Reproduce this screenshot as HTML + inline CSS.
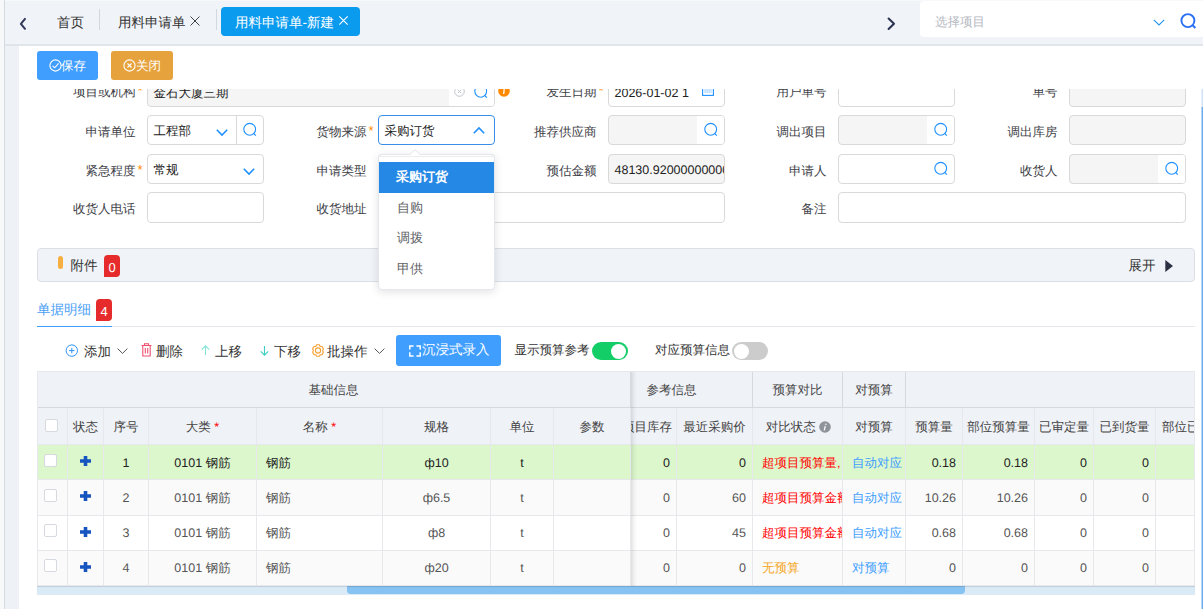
<!DOCTYPE html><html><head><meta charset="utf-8"><style>
*{box-sizing:border-box;margin:0;padding:0}
html,body{width:1203px;height:609px;overflow:hidden;background:#fff}
body{position:relative;font-family:"Liberation Sans",sans-serif;font-size:12.5px;color:#303133;text-rendering:geometricPrecision}
.a{position:absolute}
.t{position:absolute;white-space:nowrap}
svg{position:absolute;overflow:visible}
.lbl{position:absolute;font-size:12.5px;color:#3d4046;text-align:right;line-height:30px;height:30px;white-space:nowrap}
.star{position:absolute;left:100%;top:-4px;margin-left:2px;color:#ff8a00;font-size:13px;line-height:20px}
.inp{position:absolute;height:30px;border:1px solid #d9d9d9;border-radius:4px;background:#fff;font-size:12.5px;line-height:26px;padding-top:2px;padding-left:5.5px;color:#222;overflow:hidden;white-space:nowrap}
.dis{background:#f5f5f5}
.sbtn{position:absolute;right:0;top:0;width:27px;height:28px;background:#fff}
.cell{position:absolute;border-right:1px solid #e6e8eb;border-bottom:1px solid #e6e8eb;font-size:12.5px;text-align:center;white-space:nowrap;overflow:hidden;color:#333}
.hd{background:#eff2f7;color:#444}
</style></head><body>
<div class="a" style="left:0;top:0;width:1203px;height:46px;background:#f0f3f8;border-bottom:2px solid #e0e5ec"></div>
<div class="a" style="left:0;top:0;width:1203px;height:1px;background:#f7f8fa"></div>
<div class="a" style="left:0;top:0;width:4px;height:609px;background:#f7f8fa"></div>
<div class="a" style="left:4px;top:0;width:1px;height:609px;background:#d5d9e0"></div>
<div class="a" style="left:5px;top:46px;width:14px;height:563px;background:#eef1f6"></div>
<svg style="left:19px;top:17px" width="10" height="14" viewBox="0 0 10 14"><path d="M6 1.9 L1.9 6.8 L6 11.8" fill="none" stroke="#2f375a" stroke-width="2" stroke-linecap="round" stroke-linejoin="round"/></svg>
<div class="t" style="left:57px;top:13px;font-size:13.5px;line-height:20px;color:#333">首页</div>
<div class="a" style="left:99px;top:9px;width:1px;height:21px;background:#d3d7de"></div>
<div class="t" style="left:118px;top:13px;font-size:13.5px;line-height:20px;color:#333">用料申请单</div>
<svg style="left:190px;top:16px" width="10" height="10" viewBox="0 0 10 10"><path d="M0.5 0.5 L9.5 9.5 M9.5 0.5 L0.5 9.5" stroke="#444" stroke-width="1"/></svg>
<div class="a" style="left:216px;top:9px;width:1px;height:21px;background:#d3d7de"></div>
<div class="a" style="left:221px;top:7px;width:139px;height:29px;background:#0a9bef;border-radius:4px"></div>
<div class="t" style="left:235px;top:13px;font-size:13.5px;line-height:20px;color:#fff">用料申请单-新建</div>
<svg style="left:339px;top:16px" width="9" height="9" viewBox="0 0 9 9"><path d="M0.3 0.3 L8.7 8.7 M8.7 0.3 L0.3 8.7" stroke="#fff" stroke-width="1.1"/></svg>
<svg style="left:886px;top:17px" width="10" height="14" viewBox="0 0 10 14"><path d="M2.6 1.6 L8 6.8 L2.6 12" fill="none" stroke="#2b3453" stroke-width="2.1" stroke-linecap="round" stroke-linejoin="round"/></svg>
<div class="a" style="left:920px;top:1px;width:300px;height:36px;background:#fff;border-radius:4px"></div>
<div class="t" style="left:935px;top:12px;font-size:12.5px;line-height:20px;color:#b4b8bf">选择项目</div>
<svg style="left:1153px;top:19px" width="12" height="7" viewBox="0 0 12 7"><path d="M0.8 0.8 L6 6 L11.2 0.8" fill="none" stroke="#2196f3" stroke-width="1.1"/></svg>
<svg style="left:1179px;top:13px" width="19" height="17" viewBox="0 0 19 17"><circle cx="8.9" cy="7.6" r="6.5" fill="none" stroke="#2a70f4" stroke-width="1.9"/><path d="M13.6 12.3 L16.4 15" stroke="#2a70f4" stroke-width="2"/></svg>
<div class="a" style="left:37px;top:51px;width:61px;height:29px;border-radius:3px;background:#409eff"></div>
<svg style="left:48.5px;top:58.5px" width="13" height="13" viewBox="0 0 13 13"><circle cx="6.5" cy="6.5" r="5.6" fill="none" stroke="#fff" stroke-width="1.1"/><path d="M3.6 6.8 L5.7 8.8 L9.6 4.4" fill="none" stroke="#fff" stroke-width="1.1"/></svg>
<div class="t" style="left:61px;top:56px;font-size:12.5px;line-height:20px;color:#fff">保存</div>
<div class="a" style="left:111px;top:51px;width:62px;height:29px;border-radius:3px;background:#e6a23c"></div>
<svg style="left:123px;top:58.5px" width="13" height="13" viewBox="0 0 13 13"><circle cx="6.5" cy="6.5" r="5.6" fill="none" stroke="#fff" stroke-width="1.1"/><path d="M4.5 4.5 L8.5 8.5 M8.5 4.5 L4.5 8.5" fill="none" stroke="#fff" stroke-width="1.1"/></svg>
<div class="t" style="left:136px;top:56px;font-size:12.5px;line-height:20px;color:#fff">关闭</div>
<div class="a" style="left:19px;top:89px;width:1182px;height:520px;overflow:hidden"><div class="a" style="left:-19px;top:-89px;width:1203px;height:700px">
<div class="lbl" style="left:-14.5px;top:76.5px;width:150px"><span style="position:relative">项目或机构<span class="star">*</span></span></div>
<div class="inp dis" style="left:147px;top:77px;width:348px;">金石大厦三期<div class="sbtn" style="width:45px"></div><svg style="right:29px;top:7.5px" width="11" height="11" viewBox="0 0 11 11"><circle cx="5.5" cy="5.5" r="4.8" fill="none" stroke="#c0c4cc" stroke-width="1"/><path d="M3.8 3.8 L7.2 7.2 M7.2 3.8 L3.8 7.2" stroke="#c0c4cc" stroke-width="1"/></svg><svg style="right:4px;top:5px" width="18" height="18" viewBox="0 0 18 18"><circle cx="8.7" cy="8.3" r="5.9" fill="none" stroke="#1e90ff" stroke-width="1.1"/><path d="M12.6 12.3 L14.8 14.6" stroke="#1e90ff" stroke-width="1.2000000000000002"/></svg></div>
<svg style="left:498px;top:85px" width="12" height="12" viewBox="0 0 12 12"><circle cx="6" cy="6" r="5.8" fill="#ff8a00"/><path d="M6.3 3 L5.7 9" stroke="#fff" stroke-width="1.3"/></svg>
<div class="lbl" style="left:446.5px;top:76.5px;width:150px"><span style="position:relative">发生日期<span class="star">*</span></span></div>
<div class="inp " style="left:608px;top:77px;width:117px;">2026-01-02 1<svg style="right:10px;top:7px" width="12" height="11" viewBox="0 0 12 11"><rect x="0.6" y="1.6" width="10.8" height="8.8" fill="none" stroke="#1e90ff" stroke-width="1.1"/><path d="M2.5 5 H9.5 M2.5 7 H9.5" stroke="#1e90ff" stroke-width="0.8" stroke-dasharray="1.2 0.8"/></svg></div>
<div class="lbl" style="left:676.5px;top:76.5px;width:150px"><span style="position:relative">用户单号</span></div>
<div class="inp " style="left:838px;top:77px;width:117px;"></div>
<div class="lbl" style="left:907.5px;top:76.5px;width:150px"><span style="position:relative">单号</span></div>
<div class="inp dis" style="left:1069px;top:77px;width:117px;"></div>
<div class="lbl" style="left:-14.5px;top:116.5px;width:150px"><span style="position:relative">申请单位</span></div>
<div class="inp " style="left:147px;top:115px;width:117px;">工程部<svg style="right:35.5px;top:12.5px" width="12" height="7" viewBox="0 0 12 7"><path d="M0.8 0.8 L6 6 L11.2 0.8" fill="none" stroke="#1e90ff" stroke-width="1.6"/></svg><div class="a" style="right:26px;top:-1px;width:1px;height:30px;background:#d9d9d9"></div><svg style="right:4px;top:5px" width="18" height="18" viewBox="0 0 18 18"><circle cx="8.7" cy="8.3" r="5.9" fill="none" stroke="#1e90ff" stroke-width="1.1"/><path d="M12.6 12.3 L14.8 14.6" stroke="#1e90ff" stroke-width="1.2000000000000002"/></svg></div>
<div class="lbl" style="left:216.5px;top:116.5px;width:150px"><span style="position:relative">货物来源<span class="star">*</span></span></div>
<div class="inp " style="left:378px;top:115px;width:117px;border-color:#3a8ee6">采购订货<svg style="right:9px;top:11px" width="12" height="7" viewBox="0 0 12 7"><path d="M0.8 6.2 L6 1 L11.2 6.2" fill="none" stroke="#1e90ff" stroke-width="1.6"/></svg></div>
<div class="lbl" style="left:446.5px;top:116.5px;width:150px"><span style="position:relative">推荐供应商</span></div>
<div class="inp dis" style="left:608px;top:115px;width:117px;"><div class="sbtn"></div><svg style="right:4px;top:5px" width="18" height="18" viewBox="0 0 18 18"><circle cx="8.7" cy="8.3" r="5.9" fill="none" stroke="#1e90ff" stroke-width="1.1"/><path d="M12.6 12.3 L14.8 14.6" stroke="#1e90ff" stroke-width="1.2000000000000002"/></svg></div>
<div class="lbl" style="left:676.5px;top:116.5px;width:150px"><span style="position:relative">调出项目</span></div>
<div class="inp dis" style="left:838px;top:115px;width:117px;"><div class="sbtn"></div><svg style="right:4px;top:5px" width="18" height="18" viewBox="0 0 18 18"><circle cx="8.7" cy="8.3" r="5.9" fill="none" stroke="#1e90ff" stroke-width="1.1"/><path d="M12.6 12.3 L14.8 14.6" stroke="#1e90ff" stroke-width="1.2000000000000002"/></svg></div>
<div class="lbl" style="left:907.5px;top:116.5px;width:150px"><span style="position:relative">调出库房</span></div>
<div class="inp dis" style="left:1069px;top:115px;width:117px;"></div>
<div class="lbl" style="left:-14.5px;top:155.5px;width:150px"><span style="position:relative">紧急程度<span class="star">*</span></span></div>
<div class="inp " style="left:147px;top:154px;width:117px;">常规<svg style="right:8.5px;top:12.5px" width="12" height="7" viewBox="0 0 12 7"><path d="M0.8 0.8 L6 6 L11.2 0.8" fill="none" stroke="#1e90ff" stroke-width="1.6"/></svg></div>
<div class="lbl" style="left:216.5px;top:155.5px;width:150px"><span style="position:relative">申请类型</span></div>
<div class="inp " style="left:378px;top:154px;width:117px;"></div>
<div class="lbl" style="left:446.5px;top:155.5px;width:150px"><span style="position:relative">预估金额</span></div>
<div class="inp dis" style="left:608px;top:154px;width:117px;">48130.920000000000</div>
<div class="lbl" style="left:676.5px;top:155.5px;width:150px"><span style="position:relative">申请人</span></div>
<div class="inp " style="left:838px;top:154px;width:117px;"><svg style="right:4px;top:5px" width="18" height="18" viewBox="0 0 18 18"><circle cx="8.7" cy="8.3" r="5.9" fill="none" stroke="#1e90ff" stroke-width="1.1"/><path d="M12.6 12.3 L14.8 14.6" stroke="#1e90ff" stroke-width="1.2000000000000002"/></svg></div>
<div class="lbl" style="left:907.5px;top:155.5px;width:150px"><span style="position:relative">收货人</span></div>
<div class="inp dis" style="left:1069px;top:154px;width:117px;"><div class="sbtn"></div><svg style="right:4px;top:5px" width="18" height="18" viewBox="0 0 18 18"><circle cx="8.7" cy="8.3" r="5.9" fill="none" stroke="#1e90ff" stroke-width="1.1"/><path d="M12.6 12.3 L14.8 14.6" stroke="#1e90ff" stroke-width="1.2000000000000002"/></svg></div>
<div class="lbl" style="left:-14.5px;top:193.5px;width:150px"><span style="position:relative">收货人电话</span></div>
<div class="inp " style="left:147px;top:192px;width:117px;height:31px"></div>
<div class="lbl" style="left:216.5px;top:193.5px;width:150px"><span style="position:relative">收货地址</span></div>
<div class="inp " style="left:378px;top:192px;width:347px;height:31px"></div>
<div class="lbl" style="left:676.5px;top:193.5px;width:150px"><span style="position:relative">备注</span></div>
<div class="inp " style="left:838px;top:192px;width:348px;height:31px"></div>
<div class="a" style="left:37px;top:248px;width:1158px;height:34px;background:#f0f3f8;border:1px solid #dcdfe4;border-radius:4px"></div>
<div class="a" style="left:58px;top:256px;width:5px;height:13px;background:#f5b041;border-radius:3px"></div>
<div class="t" style="left:70.5px;top:256px;font-size:13.5px;line-height:20px;color:#333">附件</div>
<div class="a" style="left:104px;top:255px;width:16px;height:22px;background:#e52b2b;border-radius:4px 4px 4px 0;color:#fff;font-size:13px;line-height:25px;text-align:center">0</div>
<div class="t" style="left:1128.5px;top:256px;font-size:13.5px;line-height:20px;color:#333">展开</div>
<svg style="left:1164.5px;top:259.5px" width="8" height="12" viewBox="0 0 8 12"><path d="M0.3 0 L8 6 L0.3 12 Z" fill="#2b3143"/></svg>
<div class="a" style="left:37px;top:326px;width:1158px;height:1px;background:#e4e7ed"></div>
<div class="a" style="left:37px;top:326px;width:75px;height:1px;background:#409eff"></div>
<div class="t" style="left:37px;top:300px;font-size:13.5px;line-height:20px;color:#4a9ef5">单据明细</div>
<div class="a" style="left:96px;top:299px;width:16px;height:22px;background:#e52b2b;border-radius:4px 4px 4px 0;color:#fff;font-size:13px;line-height:26px;text-align:center">4</div>
<svg style="left:65px;top:344px" width="14" height="14" viewBox="0 0 14 14"><circle cx="6.8" cy="6.6" r="5.7" fill="none" stroke="#2a90f5" stroke-width="1"/><path d="M6.8 3.9 V9.3 M4.1 6.6 H9.5" stroke="#2a90f5" stroke-width="1"/></svg>
<div class="t" style="left:84px;top:342px;font-size:13.5px;line-height:20px;color:#333">添加</div>
<svg style="left:117px;top:348px" width="11" height="6" viewBox="0 0 11 6"><path d="M0.6 0.6 L5.5 5.4 L10.4 0.6" fill="none" stroke="#555" stroke-width="1"/></svg>
<svg style="left:141px;top:343px" width="11" height="14" viewBox="0 0 11 14"><path d="M0.5 2.5 H10.5 M3.5 2.5 V0.8 H7.5 V2.5 M1.8 2.5 V13 H9.2 V2.5 M4.3 5 V10.5 M6.7 5 V10.5" fill="none" stroke="#f0506e" stroke-width="1.1"/></svg>
<div class="t" style="left:156px;top:342px;font-size:13.5px;line-height:20px;color:#333">删除</div>
<svg style="left:201px;top:345px" width="9" height="10" viewBox="0 0 9 10"><path d="M4.5 10 V0.9 M0.8 4.6 L4.5 0.9 L8.2 4.6" fill="none" stroke="#86e3d9" stroke-width="1.1"/></svg>
<div class="t" style="left:215px;top:342px;font-size:13.5px;line-height:20px;color:#333">上移</div>
<svg style="left:260px;top:346px" width="9" height="10" viewBox="0 0 9 10"><path d="M4.5 0 V9.1 M0.8 5.4 L4.5 9.1 L8.2 5.4" fill="none" stroke="#3ccfc5" stroke-width="1.1"/></svg>
<div class="t" style="left:274px;top:342px;font-size:13.5px;line-height:20px;color:#333">下移</div>
<svg style="left:311px;top:344px" width="14" height="14" viewBox="0 0 14 14"><circle cx="7" cy="6.5" r="2.6" fill="none" stroke="#f7a035" stroke-width="1.1"/><path d="M5.6 0.8 H8.4 L9.2 2.4 L11 2.5 L12.4 4.9 L11.6 6.5 L12.4 8.2 L11 10.6 L9.2 10.7 L8.4 12.3 H5.6 L4.8 10.7 L3 10.6 L1.6 8.2 L2.4 6.5 L1.6 4.9 L3 2.5 L4.8 2.4 Z" fill="none" stroke="#f7a035" stroke-width="1.1" stroke-linejoin="round"/></svg>
<div class="t" style="left:327px;top:342px;font-size:13.5px;line-height:20px;color:#333">批操作</div>
<svg style="left:374px;top:348px" width="11" height="6" viewBox="0 0 11 6"><path d="M0.6 0.6 L5.5 5.4 L10.4 0.6" fill="none" stroke="#555" stroke-width="1"/></svg>
<div class="a" style="left:396px;top:335px;width:105px;height:31px;background:#409eff;border-radius:3px"></div>
<svg style="left:0;top:0" width="1" height="1"><path d="M409.8 349.6 V345.9 H413.6 M416.4 345.9 H420.2 V349.6 M409.8 352.2 V356 H413.6 M420.2 352.2 V356 H416.4" fill="none" stroke="#fff" stroke-width="1.5"/></svg>
<div class="t" style="left:422px;top:340px;font-size:13.5px;line-height:20px;color:#fff">沉浸式录入</div>
<div class="t" style="left:514.5px;top:340px;font-size:12.5px;line-height:20px;color:#333">显示预算参考</div>
<div class="a" style="left:592px;top:342px;width:36px;height:18px;background:#13ce66;border-radius:9px"></div>
<div class="a" style="left:611px;top:343.5px;width:15px;height:15px;background:#fff;border-radius:50%"></div>
<div class="t" style="left:655px;top:340px;font-size:12.5px;line-height:20px;color:#333">对应预算信息</div>
<div class="a" style="left:732px;top:342px;width:36px;height:18px;background:#cccccc;border-radius:9px"></div>
<div class="a" style="left:733.5px;top:343.5px;width:15px;height:15px;background:#fff;border-radius:50%"></div>
<div class="a" style="left:37px;top:371px;width:1158px;height:215px;overflow:hidden;border-left:1px solid #e6e8eb;border-top:1px solid #e6e8eb">
<div class="cell hd" style="left:553px;top:-1px;width:162px;height:37px;line-height:39px;border-color:#d6d9dd">参考信息</div>
<div class="cell hd" style="left:715px;top:-1px;width:90px;height:37px;line-height:39px;border-color:#d6d9dd">预算对比</div>
<div class="cell hd" style="left:805px;top:-1px;width:63px;height:37px;line-height:39px;border-color:#d6d9dd">对预算</div>
<div class="cell hd" style="left:868px;top:-1px;width:324px;height:37px;line-height:39px;border-color:#d6d9dd"></div>
<div class="cell hd" style="left:580px;top:36px;width:59px;height:37px;line-height:39px;">项目库存</div>
<div class="cell hd" style="left:639px;top:36px;width:76px;height:37px;line-height:39px;">最近采购价</div>
<div class="cell hd" style="left:715px;top:36px;width:90px;height:37px;line-height:39px;"><span style="position:relative;left:1px">对比状态 <svg style="position:relative;vertical-align:-2px" width="12" height="12" viewBox="0 0 12 12"><circle cx="6" cy="6" r="5.8" fill="#8f939a"/><circle cx="6.9" cy="3.2" r="0.8" fill="#fff"/><path d="M6.3 5 L5.2 9.4" stroke="#fff" stroke-width="1.2"/></svg></span></div>
<div class="cell hd" style="left:805px;top:36px;width:63px;height:37px;line-height:39px;">对预算</div>
<div class="cell hd" style="left:868px;top:36px;width:57px;height:37px;line-height:39px;">预算量</div>
<div class="cell hd" style="left:925px;top:36px;width:72px;height:37px;line-height:39px;">部位预算量</div>
<div class="cell hd" style="left:997px;top:36px;width:59px;height:37px;line-height:39px;">已审定量</div>
<div class="cell hd" style="left:1056px;top:36px;width:62px;height:37px;line-height:39px;">已到货量</div>
<div class="cell hd" style="left:1118px;top:36px;width:74px;height:37px;line-height:39px;text-align:left;padding-left:6px">部位已到货</div>
<div class="cell " style="left:580px;top:73px;width:59px;height:35px;line-height:37px;background:#dcf7cc;text-align:right;padding-right:6px;color:#222">0</div>
<div class="cell " style="left:639px;top:73px;width:76px;height:35px;line-height:37px;background:#dcf7cc;text-align:right;padding-right:6px;color:#222">0</div>
<div class="cell " style="left:715px;top:73px;width:90px;height:35px;line-height:37px;background:#dcf7cc;text-align:left;padding-left:9px;color:#222"><span style="color:#f00">超项目预算量,</span></div>
<div class="cell " style="left:805px;top:73px;width:63px;height:35px;line-height:37px;background:#dcf7cc;text-align:left;padding-left:9px;color:#222"><span style="color:#409eff">自动对应</span></div>
<div class="cell " style="left:868px;top:73px;width:57px;height:35px;line-height:37px;background:#dcf7cc;text-align:right;padding-right:6px;color:#222">0.18</div>
<div class="cell " style="left:925px;top:73px;width:72px;height:35px;line-height:37px;background:#dcf7cc;text-align:right;padding-right:6px;color:#222">0.18</div>
<div class="cell " style="left:997px;top:73px;width:59px;height:35px;line-height:37px;background:#dcf7cc;text-align:right;padding-right:6px;color:#222">0</div>
<div class="cell " style="left:1056px;top:73px;width:62px;height:35px;line-height:37px;background:#dcf7cc;text-align:right;padding-right:6px;color:#222">0</div>
<div class="cell " style="left:1118px;top:73px;width:74px;height:35px;line-height:37px;background:#dcf7cc;text-align:left;padding-left:9px;color:#222"></div>
<div class="cell " style="left:580px;top:108px;width:59px;height:36px;line-height:36px;background:#fafafa;text-align:right;padding-right:6px;color:#555">0</div>
<div class="cell " style="left:639px;top:108px;width:76px;height:36px;line-height:36px;background:#fafafa;text-align:right;padding-right:6px;color:#555">60</div>
<div class="cell " style="left:715px;top:108px;width:90px;height:36px;line-height:36px;background:#fafafa;text-align:left;padding-left:9px;color:#555"><span style="color:#f00">超项目预算金额</span></div>
<div class="cell " style="left:805px;top:108px;width:63px;height:36px;line-height:36px;background:#fafafa;text-align:left;padding-left:9px;color:#555"><span style="color:#409eff">自动对应</span></div>
<div class="cell " style="left:868px;top:108px;width:57px;height:36px;line-height:36px;background:#fafafa;text-align:right;padding-right:6px;color:#555">10.26</div>
<div class="cell " style="left:925px;top:108px;width:72px;height:36px;line-height:36px;background:#fafafa;text-align:right;padding-right:6px;color:#555">10.26</div>
<div class="cell " style="left:997px;top:108px;width:59px;height:36px;line-height:36px;background:#fafafa;text-align:right;padding-right:6px;color:#555">0</div>
<div class="cell " style="left:1056px;top:108px;width:62px;height:36px;line-height:36px;background:#fafafa;text-align:right;padding-right:6px;color:#555">0</div>
<div class="cell " style="left:1118px;top:108px;width:74px;height:36px;line-height:36px;background:#fafafa;text-align:left;padding-left:9px;color:#555"></div>
<div class="cell " style="left:580px;top:144px;width:59px;height:35px;line-height:35px;background:#ffffff;text-align:right;padding-right:6px;color:#555">0</div>
<div class="cell " style="left:639px;top:144px;width:76px;height:35px;line-height:35px;background:#ffffff;text-align:right;padding-right:6px;color:#555">45</div>
<div class="cell " style="left:715px;top:144px;width:90px;height:35px;line-height:35px;background:#ffffff;text-align:left;padding-left:9px;color:#555"><span style="color:#f00">超项目预算金额</span></div>
<div class="cell " style="left:805px;top:144px;width:63px;height:35px;line-height:35px;background:#ffffff;text-align:left;padding-left:9px;color:#555"><span style="color:#409eff">自动对应</span></div>
<div class="cell " style="left:868px;top:144px;width:57px;height:35px;line-height:35px;background:#ffffff;text-align:right;padding-right:6px;color:#555">0.68</div>
<div class="cell " style="left:925px;top:144px;width:72px;height:35px;line-height:35px;background:#ffffff;text-align:right;padding-right:6px;color:#555">0.68</div>
<div class="cell " style="left:997px;top:144px;width:59px;height:35px;line-height:35px;background:#ffffff;text-align:right;padding-right:6px;color:#555">0</div>
<div class="cell " style="left:1056px;top:144px;width:62px;height:35px;line-height:35px;background:#ffffff;text-align:right;padding-right:6px;color:#555">0</div>
<div class="cell " style="left:1118px;top:144px;width:74px;height:35px;line-height:35px;background:#ffffff;text-align:left;padding-left:9px;color:#555"></div>
<div class="cell " style="left:580px;top:179px;width:59px;height:35px;line-height:35px;background:#fafafa;text-align:right;padding-right:6px;color:#555">0</div>
<div class="cell " style="left:639px;top:179px;width:76px;height:35px;line-height:35px;background:#fafafa;text-align:right;padding-right:6px;color:#555">0</div>
<div class="cell " style="left:715px;top:179px;width:90px;height:35px;line-height:35px;background:#fafafa;text-align:left;padding-left:9px;color:#555"><span style="color:#f5a623">无预算</span></div>
<div class="cell " style="left:805px;top:179px;width:63px;height:35px;line-height:35px;background:#fafafa;text-align:left;padding-left:9px;color:#555"><span style="color:#409eff">对预算</span></div>
<div class="cell " style="left:868px;top:179px;width:57px;height:35px;line-height:35px;background:#fafafa;text-align:right;padding-right:6px;color:#555">0</div>
<div class="cell " style="left:925px;top:179px;width:72px;height:35px;line-height:35px;background:#fafafa;text-align:right;padding-right:6px;color:#555">0</div>
<div class="cell " style="left:997px;top:179px;width:59px;height:35px;line-height:35px;background:#fafafa;text-align:right;padding-right:6px;color:#555">0</div>
<div class="cell " style="left:1056px;top:179px;width:62px;height:35px;line-height:35px;background:#fafafa;text-align:right;padding-right:6px;color:#555">0</div>
<div class="cell " style="left:1118px;top:179px;width:74px;height:35px;line-height:35px;background:#fafafa;text-align:left;padding-left:9px;color:#555"></div>
<div class="a" style="left:593px;top:0;width:6px;height:215px;background:linear-gradient(to right, rgba(0,0,0,0.11), rgba(0,0,0,0.04) 50%, rgba(0,0,0,0))"></div>
<div class="a" style="left:0;top:0;width:594px;height:215px">
<div class="cell hd" style="left:-1px;top:-1px;width:594px;height:37px;line-height:39px;border-color:#d6d9dd">基础信息</div>
<div class="cell hd" style="left:-1px;top:36px;width:31px;height:37px;line-height:39px;"></div>
<div class="cell hd" style="left:30px;top:36px;width:36px;height:37px;line-height:39px;">状态</div>
<div class="cell hd" style="left:66px;top:36px;width:45px;height:37px;line-height:39px;">序号</div>
<div class="cell hd" style="left:111px;top:36px;width:108px;height:37px;line-height:39px;">大类 <span style="color:#f00">*</span></div>
<div class="cell hd" style="left:219px;top:36px;width:126px;height:37px;line-height:39px;">名称 <span style="color:#f00">*</span></div>
<div class="cell hd" style="left:345px;top:36px;width:108px;height:37px;line-height:39px;">规格</div>
<div class="cell hd" style="left:453px;top:36px;width:63px;height:37px;line-height:39px;">单位</div>
<div class="cell hd" style="left:516px;top:36px;width:77px;height:37px;line-height:39px;">参数</div>
<div class="cell " style="left:-1px;top:73px;width:31px;height:35px;line-height:37px;background:#dcf7cc;color:#222"></div>
<div class="cell " style="left:30px;top:73px;width:36px;height:35px;line-height:37px;background:#dcf7cc;color:#222"><svg style="left:11.5px;top:10.5px" width="11" height="10" viewBox="0 0 11 10"><path d="M3.7 0 H7.3 V3.3 H11 V6.7 H7.3 V10 H3.7 V6.7 H0 V3.3 H3.7 Z" fill="#1654c0"/></svg></div>
<div class="cell " style="left:66px;top:73px;width:45px;height:35px;line-height:37px;background:#dcf7cc;color:#222">1</div>
<div class="cell " style="left:111px;top:73px;width:108px;height:35px;line-height:37px;background:#dcf7cc;color:#222">0101 钢筋</div>
<div class="cell " style="left:219px;top:73px;width:126px;height:35px;line-height:37px;background:#dcf7cc;color:#222;text-align:left;padding-left:9px">钢筋</div>
<div class="cell " style="left:345px;top:73px;width:108px;height:35px;line-height:37px;background:#dcf7cc;color:#222">ф10</div>
<div class="cell " style="left:453px;top:73px;width:63px;height:35px;line-height:37px;background:#dcf7cc;color:#222">t</div>
<div class="cell " style="left:516px;top:73px;width:77px;height:35px;line-height:37px;background:#dcf7cc;color:#222"></div>
<div class="cell " style="left:-1px;top:108px;width:31px;height:36px;line-height:36px;background:#fafafa;color:#555"></div>
<div class="cell " style="left:30px;top:108px;width:36px;height:36px;line-height:36px;background:#fafafa;color:#555"><svg style="left:11.5px;top:10.5px" width="11" height="10" viewBox="0 0 11 10"><path d="M3.7 0 H7.3 V3.3 H11 V6.7 H7.3 V10 H3.7 V6.7 H0 V3.3 H3.7 Z" fill="#1654c0"/></svg></div>
<div class="cell " style="left:66px;top:108px;width:45px;height:36px;line-height:36px;background:#fafafa;color:#555">2</div>
<div class="cell " style="left:111px;top:108px;width:108px;height:36px;line-height:36px;background:#fafafa;color:#555">0101 钢筋</div>
<div class="cell " style="left:219px;top:108px;width:126px;height:36px;line-height:36px;background:#fafafa;color:#555;text-align:left;padding-left:9px">钢筋</div>
<div class="cell " style="left:345px;top:108px;width:108px;height:36px;line-height:36px;background:#fafafa;color:#555">ф6.5</div>
<div class="cell " style="left:453px;top:108px;width:63px;height:36px;line-height:36px;background:#fafafa;color:#555">t</div>
<div class="cell " style="left:516px;top:108px;width:77px;height:36px;line-height:36px;background:#fafafa;color:#555"></div>
<div class="cell " style="left:-1px;top:144px;width:31px;height:35px;line-height:35px;background:#ffffff;color:#555"></div>
<div class="cell " style="left:30px;top:144px;width:36px;height:35px;line-height:35px;background:#ffffff;color:#555"><svg style="left:11.5px;top:10.5px" width="11" height="10" viewBox="0 0 11 10"><path d="M3.7 0 H7.3 V3.3 H11 V6.7 H7.3 V10 H3.7 V6.7 H0 V3.3 H3.7 Z" fill="#1654c0"/></svg></div>
<div class="cell " style="left:66px;top:144px;width:45px;height:35px;line-height:35px;background:#ffffff;color:#555">3</div>
<div class="cell " style="left:111px;top:144px;width:108px;height:35px;line-height:35px;background:#ffffff;color:#555">0101 钢筋</div>
<div class="cell " style="left:219px;top:144px;width:126px;height:35px;line-height:35px;background:#ffffff;color:#555;text-align:left;padding-left:9px">钢筋</div>
<div class="cell " style="left:345px;top:144px;width:108px;height:35px;line-height:35px;background:#ffffff;color:#555">ф8</div>
<div class="cell " style="left:453px;top:144px;width:63px;height:35px;line-height:35px;background:#ffffff;color:#555">t</div>
<div class="cell " style="left:516px;top:144px;width:77px;height:35px;line-height:35px;background:#ffffff;color:#555"></div>
<div class="cell " style="left:-1px;top:179px;width:31px;height:35px;line-height:35px;background:#fafafa;color:#555"></div>
<div class="cell " style="left:30px;top:179px;width:36px;height:35px;line-height:35px;background:#fafafa;color:#555"><svg style="left:11.5px;top:10.5px" width="11" height="10" viewBox="0 0 11 10"><path d="M3.7 0 H7.3 V3.3 H11 V6.7 H7.3 V10 H3.7 V6.7 H0 V3.3 H3.7 Z" fill="#1654c0"/></svg></div>
<div class="cell " style="left:66px;top:179px;width:45px;height:35px;line-height:35px;background:#fafafa;color:#555">4</div>
<div class="cell " style="left:111px;top:179px;width:108px;height:35px;line-height:35px;background:#fafafa;color:#555">0101 钢筋</div>
<div class="cell " style="left:219px;top:179px;width:126px;height:35px;line-height:35px;background:#fafafa;color:#555;text-align:left;padding-left:9px">钢筋</div>
<div class="cell " style="left:345px;top:179px;width:108px;height:35px;line-height:35px;background:#fafafa;color:#555">ф20</div>
<div class="cell " style="left:453px;top:179px;width:63px;height:35px;line-height:35px;background:#fafafa;color:#555">t</div>
<div class="cell " style="left:516px;top:179px;width:77px;height:35px;line-height:35px;background:#fafafa;color:#555"></div>
</div>
<div class="a" style="left:7px;top:47px;width:13px;height:13px;background:#fff;border:1px solid #d6d9de;border-radius:2px"></div>
<div class="a" style="left:6px;top:82px;width:13px;height:13px;background:#fff;border:1px solid #d6d9de;border-radius:2px"></div>
<div class="a" style="left:6px;top:117px;width:13px;height:13px;background:#fff;border:1px solid #d6d9de;border-radius:2px"></div>
<div class="a" style="left:6px;top:152px;width:13px;height:13px;background:#fff;border:1px solid #d6d9de;border-radius:2px"></div>
<div class="a" style="left:6px;top:187px;width:13px;height:13px;background:#fff;border:1px solid #d6d9de;border-radius:2px"></div>
</div>
<div class="a" style="left:1194px;top:371px;width:1px;height:215px;background:#e6e8eb"></div>
<div class="a" style="left:37px;top:586px;width:1158px;height:9px;background:#dbeaf7;box-shadow:inset 0 1px 1px rgba(0,0,0,0.12)"></div>
<div class="a" style="left:347px;top:586px;width:618px;height:8px;background:#86c3f2;border-radius:0 0 4px 4px;box-shadow:inset 0 1px 1px rgba(0,0,0,0.15)"></div>
<div class="a" style="left:378px;top:154px;width:117px;height:136px;background:#fff;border:1px solid #e4e7ed;border-radius:4px;box-shadow:0 2px 8px rgba(0,0,0,0.12)"></div>
<svg style="left:409px;top:149px" width="12" height="7" viewBox="0 0 12 7"><path d="M0 6.5 L6 0.8 L12 6.5" fill="#fff" stroke="#e4e7ed" stroke-width="1"/><rect x="0" y="6" width="12" height="2" fill="#fff"/></svg>
<div class="a" style="left:380px;top:156px;width:113px;height:1px;background:#ededed"></div>
<div class="a" style="left:379px;top:162px;width:115px;height:31px;background:#2688e5"></div>
<div class="t" style="left:396px;top:167px;font-size:13px;line-height:20px;color:#fff;font-weight:bold">采购订货</div>
<div class="t" style="left:397px;top:198px;font-size:13px;line-height:20px;color:#606266">自购</div>
<div class="t" style="left:397px;top:228px;font-size:13px;line-height:20px;color:#606266">调拨</div>
<div class="t" style="left:397px;top:259px;font-size:13px;line-height:20px;color:#606266">甲供</div>
</div></div>
<div class="a" style="left:1201px;top:89px;width:1px;height:18px;background:#e8f1fb"></div>
<div class="a" style="left:1202px;top:89px;width:1px;height:18px;background:#cfe2f6"></div>
<div class="a" style="left:1201px;top:107px;width:1px;height:502px;background:#b5d5f5"></div>
<div class="a" style="left:1202px;top:107px;width:1px;height:502px;background:#6cadeb"></div>
</body></html>
